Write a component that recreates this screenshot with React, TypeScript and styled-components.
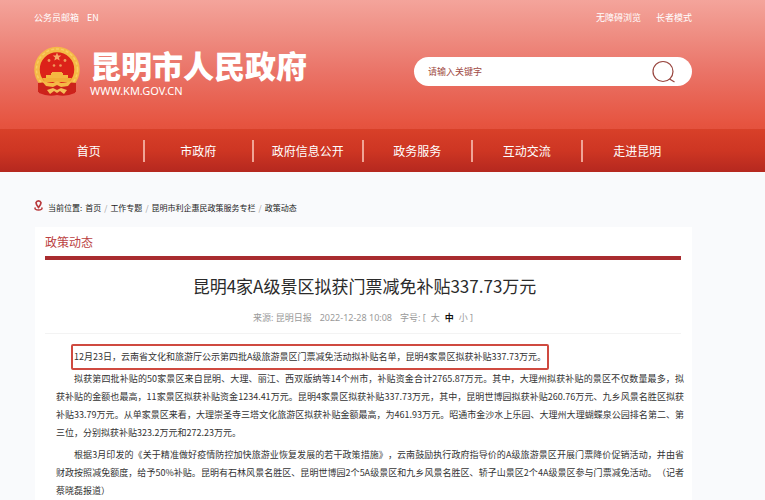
import React from "react";
import styled, { createGlobalStyle } from "styled-components";

const GlobalStyle = createGlobalStyle`
  * { box-sizing: border-box; }
  body {
    margin: 0;
    background: #f9fafc;
    font-family: "Noto Sans CJK SC", "Noto Sans", sans-serif;
    font-size: 9px;
    color: #333;
  }
  a { color: inherit; text-decoration: none; }
  h1, h2, p { margin: 0; font-weight: 400; }
  button, input { font: inherit; border: 0; padding: 0; background: none; }
`;

const Page = styled.div`
  min-height: 100vh;
  display: flex;
  flex-direction: column;
`;

const Banner = styled.header`
  height: 129px;
  padding: 12px 73px 0 34px;
  background: linear-gradient(#f4a49b 0%, #ef8f84 25%, #ea7468 55%, #e65440 96%, #e4523e 100%);
  color: #fff;
`;

const TopBar = styled.div`
  display: flex;
  justify-content: space-between;
  line-height: 12px;
`;

const LinkGroup = styled.div<{ $gap: number }>`
  display: flex;
  gap: ${(p) => p.$gap}px;
`;

const BrandRow = styled.div`
  display: flex;
  justify-content: space-between;
  align-items: flex-start;
  padding-top: 22px;
`;

const Brand = styled.a`
  display: flex;
  gap: 10px;
`;

const BrandText = styled.span`
  display: flex;
  flex-direction: column;
`;

const BrandName = styled.span`
  font-size: 31px;
  line-height: 38px;
  font-weight: 900;
`;

const BrandUrl = styled.span`
  font-family: "Noto Sans", sans-serif;
  font-size: 11px;
  line-height: 14px;
`;

const SearchForm = styled.form`
  width: 278px;
  height: 29px;
  margin-top: 11px;
  padding: 0 16px 0 14px;
  display: flex;
  align-items: center;
  border-radius: 15px;
  background: #fff;
`;

const SearchInput = styled.input`
  flex: 1;
  min-width: 0;
  outline: 0;
  color: #a04a44;
  &::placeholder { color: #a04a44; opacity: 1; }
`;

const SearchButton = styled.button`
  display: flex;
  cursor: pointer;
`;

const Nav = styled.nav`
  height: 43px;
  padding: 0 73px 0 35px;
  display: grid;
  grid-template-columns: repeat(6, 1fr);
  align-items: center;
  background: linear-gradient(#d84029, #ce3623 50%, #b5281f);
  color: #fff;
`;

const NavItem = styled.a`
  font-size: 12px;
  line-height: 22px;
  text-align: center;
  &:not(:last-child) { border-right: 2px solid #f0a596; }
`;

const Crumbs = styled.nav`
  padding: 27px 73px 0 34px;
  display: flex;
  gap: 3px;
  font-size: 8px;
  line-height: 18px;
  color: #222;
`;

const CrumbLabel = styled.span`
  margin-left: 1px;
`;

const CrumbSlash = styled.span`
  color: #999;
`;

const Card = styled.main`
  flex: 1;
  margin: 10px 73px 0 35px;
  padding: 6px 8px 0 10px;
  background: #fff;
`;

const SectionTitle = styled.h2`
  margin-right: 3px;
  padding-bottom: 5px;
  border-bottom: 4px solid #a92c2f;
  font-size: 12px;
  line-height: 18px;
  color: #bb3f42;
`;

const Title = styled.h1`
  margin-top: 13px;
  font-size: 17px;
  line-height: 26px;
  text-align: center;
  color: #2b2b2b;
`;

const Meta = styled.div`
  margin: 13px 3px 0 0;
  padding-bottom: 9px;
  display: flex;
  justify-content: center;
  gap: 8px;
  font-family: "Noto Sans", "Noto Sans CJK SC", sans-serif;
  line-height: 12px;
  color: #9a9a9a;
  border-bottom: 1px solid #f3f3f3;
`;

const SizeButton = styled.button<{ $active?: boolean }>`
  margin-left: 5px;
  color: ${(p) => (p.$active ? "#111" : "inherit")};
  font-weight: ${(p) => (p.$active ? 700 : 400)};
`;

const Article = styled.article`
  padding: 10px 0 0 11px;
  line-height: 18px;
  text-align: justify;
  text-spacing-trim: space-all;
`;

const Highlight = styled.p`
  width: fit-content;
  margin-left: 15px;
  padding: 2px 1px;
  border: 2px solid #cf4a40;
  border-radius: 2px;
`;

const Paragraph = styled.p`
  margin-bottom: 4px;
  text-indent: 2em;
`;

const Emblem = () => (
  <svg width="46" height="50" viewBox="0 0 46 50" aria-hidden="true">
    <path d="M5 34 L5 47 Q14 51 23 49 Q32 51 41 47 L41 34 Z" fill="#cf1f1c" />
    <circle cx="23" cy="23.500" r="20" fill="#dc2219" stroke="#f5b946" strokeWidth="5.500" />
    <circle cx="23" cy="23.500" r="20.500" fill="none" stroke="#f9cd62" strokeWidth="1.500" strokeDasharray="3 2" />
    <path d="M23 6.500l1.200 2.900 3.100.2-2.400 2 .8 3-2.700-1.700-2.700 1.700.8-3-2.400-2 3.100-.2z" fill="#f6a866" />
    <g fill="#f09a5c">
      <circle cx="15" cy="14.500" r="1.400" />
      <circle cx="31" cy="14.500" r="1.400" />
      <circle cx="20" cy="19.500" r="1.300" />
      <circle cx="26.500" cy="19.500" r="1.300" />
    </g>
    <path d="M17 29v-2h1v-1h10v1h1v2h5v4H12v-4z" fill="#f5b741" />
    <path d="M8 32h30l-3 4H11z" fill="#f2ae38" />
    <path d="M4 37q9-2 14 3l5-2 5 2q5-5 14-3v9q-9 3-19 2q-10 1-19-2z" fill="#cc231b" />
    <path d="M7 34q7 3 12 3l4-2 4 2q5 0 12-3l-5 6-7 1-4-2-4 2-7-1z" fill="#f5b946" />
    <path d="M13 44l6-2 4 2 4-2 6 2-3 4-4-3-3 2-3-2-4 3z" fill="#f5bd58" />
  </svg>
);

const SearchIcon = () => (
  <svg width="24" height="24" viewBox="0 0 24 24" fill="none" stroke="#98453e" strokeWidth="1.200" aria-hidden="true">
    <circle cx="11" cy="11.500" r="10" />
    <path d="M17.500 19L22.500 22" />
  </svg>
);

const PinIcon = () => (
  <svg width="10" height="12" viewBox="0 0 10 12" fill="none" stroke="#b8383b" aria-hidden="true">
    <path d="M4.500 8.500C2.800 6.400 2 5 2 3.700a2.600 2.600 0 0 1 5 0C7 5 6.200 6.400 4.500 8.500z" strokeWidth="1.700" />
    <path d="M1.500 8.500C0 9.800 2 11 4.500 11S9 9.800 7.500 8.500" strokeWidth="1.500" />
  </svg>
);

const navItems = ["首页", "市政府", "政府信息公开", "政务服务", "互动交流", "走进昆明"];
const crumbs = ["首页", "工作专题", "昆明市利企惠民政策服务专栏", "政策动态"];
const paragraphs = [
  "拟获第四批补贴的50家景区来自昆明、大理、丽江、西双版纳等14个州市，补贴资金合计2765.87万元。其中，大理州拟获补贴的景区不仅数量最多，拟获补贴的金额也最高，11家景区拟获补贴资金1234.41万元。昆明4家景区拟获补贴337.73万元，其中，昆明世博园拟获补贴260.76万元、九乡风景名胜区拟获补贴33.79万元。从单家景区来看，大理崇圣寺三塔文化旅游区拟获补贴金额最高，为461.93万元。昭通市金沙水上乐园、大理州大理蝴蝶泉公园排名第二、第三位，分别拟获补贴323.2万元和272.23万元。",
  "根据3月印发的《关于精准做好疫情防控加快旅游业恢复发展的若干政策措施》，云南鼓励执行政府指导价的A级旅游景区开展门票降价促销活动，并由省财政按照减免额度，给予50%补贴。昆明有石林风景名胜区、昆明世博园2个5A级景区和九乡风景名胜区、轿子山景区2个4A级景区参与门票减免活动。（记者 蔡晓磊报道）",
];

export default function App() {
  return (
    <Page lang="zh-CN">
      <GlobalStyle />
      <Banner>
        <TopBar>
          <LinkGroup $gap={8}>
            <a href="#mail">公务员邮箱</a>
            <a href="#en">EN</a>
          </LinkGroup>
          <LinkGroup $gap={15}>
            <a href="#accessible">无障碍浏览</a>
            <a href="#senior">长者模式</a>
          </LinkGroup>
        </TopBar>
        <BrandRow>
          <Brand href="#home">
            <Emblem />
            <BrandText>
              <BrandName>昆明市人民政府</BrandName>
              <BrandUrl>WWW.KM.GOV.CN</BrandUrl>
            </BrandText>
          </Brand>
          <SearchForm role="search" onSubmit={(e) => e.preventDefault()}>
            <SearchInput type="text" aria-label="搜索" placeholder="请输入关键字" />
            <SearchButton type="submit" aria-label="搜索">
              <SearchIcon />
            </SearchButton>
          </SearchForm>
        </BrandRow>
      </Banner>
      <Nav>
        {navItems.map((item) => (
          <NavItem key={item} href="#nav">{item}</NavItem>
        ))}
      </Nav>
      <Crumbs aria-label="当前位置">
        <PinIcon />
        <CrumbLabel>当前位置:</CrumbLabel>
        {crumbs.map((c, i) => (
          <React.Fragment key={c}>
            {i > 0 && <CrumbSlash>/</CrumbSlash>}
            <a href="#crumb">{c}</a>
          </React.Fragment>
        ))}
      </Crumbs>
      <Card>
        <SectionTitle>政策动态</SectionTitle>
        <Title>昆明4家A级景区拟获门票减免补贴337.73万元</Title>
        <Meta>
          <span>来源: 昆明日报</span>
          <span>2022-12-28 10:08</span>
          <span>
            字号: [<SizeButton type="button">大</SizeButton>
            <SizeButton type="button" $active>中</SizeButton>
            <SizeButton type="button">小</SizeButton> ]
          </span>
        </Meta>
        <Article>
          <Highlight>12月23日，云南省文化和旅游厅公示第四批A级旅游景区门票减免活动拟补贴名单，昆明4家景区拟获补贴337.73万元。</Highlight>
          {paragraphs.map((t) => (
            <Paragraph key={t}>{t}</Paragraph>
          ))}
        </Article>
      </Card>
    </Page>
  );
}
